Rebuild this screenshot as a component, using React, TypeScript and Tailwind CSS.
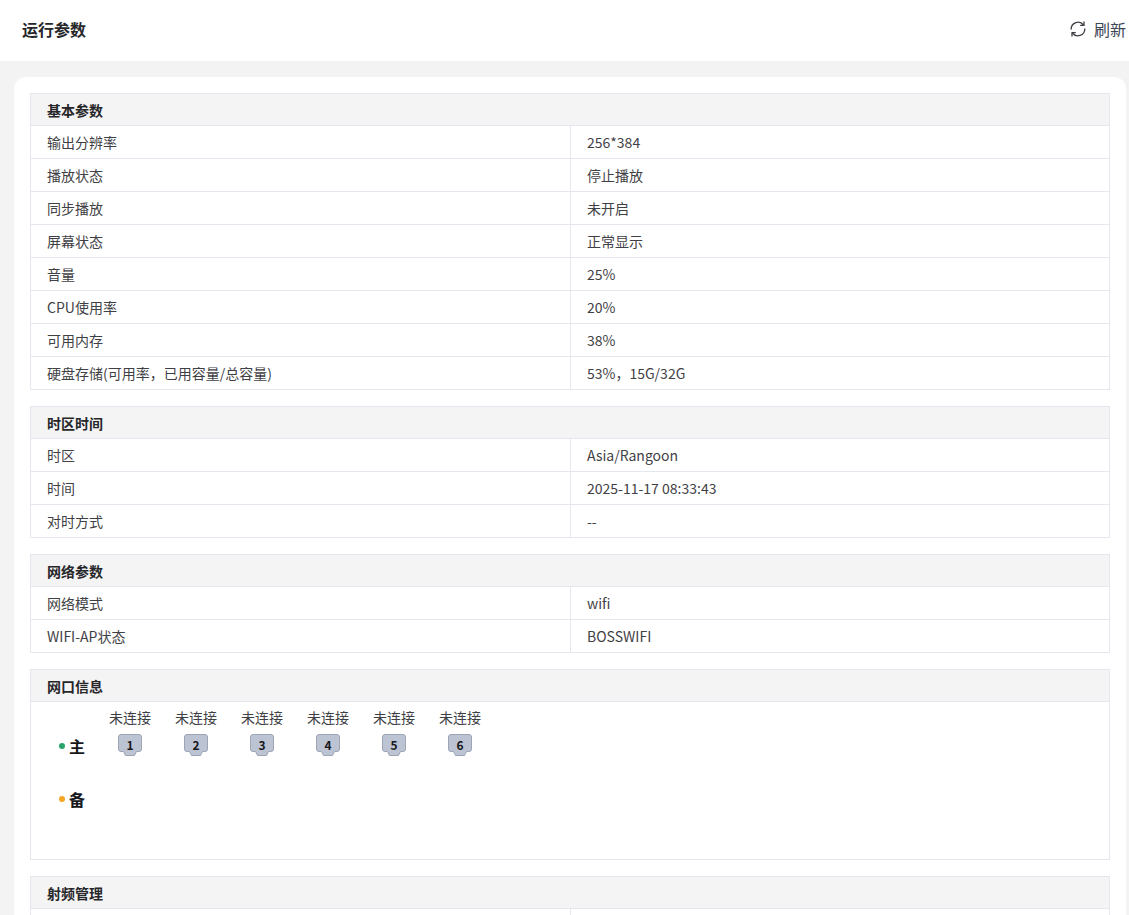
const FONT = "font-['Noto_Sans_CJK_SC','Noto_Sans',sans-serif]";

interface Row {
  label: string;
  value: string;
}

const basicRows: Row[] = [
  { label: '输出分辨率', value: '256*384' },
  { label: '播放状态', value: '停止播放' },
  { label: '同步播放', value: '未开启' },
  { label: '屏幕状态', value: '正常显示' },
  { label: '音量', value: '25%' },
  { label: 'CPU使用率', value: '20%' },
  { label: '可用内存', value: '38%' },
  { label: '硬盘存储(可用率，已用容量/总容量)', value: '53%，15G/32G' },
];

const timeRows: Row[] = [
  { label: '时区', value: 'Asia/Rangoon' },
  { label: '时间', value: '2025-11-17 08:33:43' },
  { label: '对时方式', value: '--' },
];

const networkRows: Row[] = [
  { label: '网络模式', value: 'wifi' },
  { label: 'WIFI-AP状态', value: 'BOSSWIFI' },
];

const SectionHead = ({ title }: { title: string }) => (
  <div className="h-[31px] px-4 flex items-center bg-[#f4f4f5] text-sm font-semibold text-[#27272a]">{title}</div>
);

const ParamRow = ({ label, value }: Row) => (
  <div className="flex h-[33px] border-t border-[#e4e7ed] text-sm text-[#3f3f46]">
    <div className="w-[540px] shrink-0 px-4 flex items-center border-r border-[#e4e7ed]">{label}</div>
    <div className="flex-1 px-4 flex items-center">{value}</div>
  </div>
);

const ParamTable = ({ title, rows }: { title: string; rows: Row[] }) => (
  <section className="border border-[#e4e7ed]">
    <SectionHead title={title} />
    {rows.map((row) => (
      <ParamRow key={row.label} {...row} />
    ))}
  </section>
);

const PortIcon = ({ n }: { n: number }) => (
  <div className="relative w-[24px] h-[22px]">
    <svg width="24" height="22" viewBox="0 0 24 22" className="block">
      <path
        d="M3 .5H21A2.500 2.500 0 0 1 23.500 3V15A2.500 2.500 0 0 1 21 17.500H18.500L16.500 21.500H7.500L5.500 17.500H3A2.500 2.500 0 0 1 .5 15V3A2.500 2.500 0 0 1 3 .5Z"
        fill="#bcc3d3"
        stroke="#9ea5b5"
        strokeWidth="1"
      />
    </svg>
    <span className="absolute inset-x-0 top-[2px] text-center text-xs leading-[18px] font-semibold text-[#18181b]">{n}</span>
  </div>
);

const ports = [1, 2, 3, 4, 5, 6];

export default function App() {
  return (
    <div className={`${FONT} h-[915px] overflow-hidden bg-[#f3f3f3]`}>
      <header className="h-[61px] bg-white flex items-center justify-between pl-[22px] pr-[3px] pb-1">
        <h1 className="text-base font-semibold text-[#27272a]">运行参数</h1>
        <button type="button" className="flex items-center gap-2 text-base text-[#3b4654]">
          <svg width="16" height="16" viewBox="0 0 16 16" fill="none" stroke="#3f3f46" strokeWidth="1.3" strokeLinecap="round" strokeLinejoin="round">
            <path d="M1.200 8A6.800 6.800 0 0 1 13.500 4" />
            <path d="M14 1V4.400H10.700" />
            <path d="M14.800 8A6.800 6.800 0 0 1 2.500 12" />
            <path d="M2 15V11.600H5.300" />
          </svg>
          刷新
        </button>
      </header>

      <main className="mt-4 ml-[14px] mr-[3px] rounded-t-xl bg-white p-4 flex flex-col gap-4">
        <ParamTable title="基本参数" rows={basicRows} />
        <ParamTable title="时区时间" rows={timeRows} />
        <ParamTable title="网络参数" rows={networkRows} />

        <section className="border border-[#e4e7ed]">
          <SectionHead title="网口信息" />
          <div className="h-[158px] border-t border-[#e4e7ed] pl-[28px] pt-[5px]">
            <div className="flex">
              <div className="w-[50px] pt-[27px] flex items-start gap-[4px]">
                <span className="w-[6px] h-[6px] rounded-full bg-[#2aa36b] mt-[9px]" />
                <span className="text-base leading-[24px] font-bold text-[#18181b]">主</span>
              </div>
              <div className="flex gap-[24px]">
                {ports.map((n) => (
                  <div key={n} className="w-[42px] flex flex-col items-center gap-[7px]">
                    <span className="text-sm leading-[20px] text-[#3f3f46]">未连接</span>
                    <PortIcon n={n} />
                  </div>
                ))}
              </div>
            </div>
            <div className="flex items-start gap-[4px] mt-[29px]">
              <span className="w-[6px] h-[6px] rounded-full bg-[#f5a623] mt-[9px]" />
              <span className="text-base leading-[24px] font-bold text-[#18181b]">备</span>
            </div>
          </div>
        </section>

        <section className="border border-[#e4e7ed]">
          <SectionHead title="射频管理" />
          <ParamRow label="" value="" />
        </section>
      </main>
    </div>
  );
}
